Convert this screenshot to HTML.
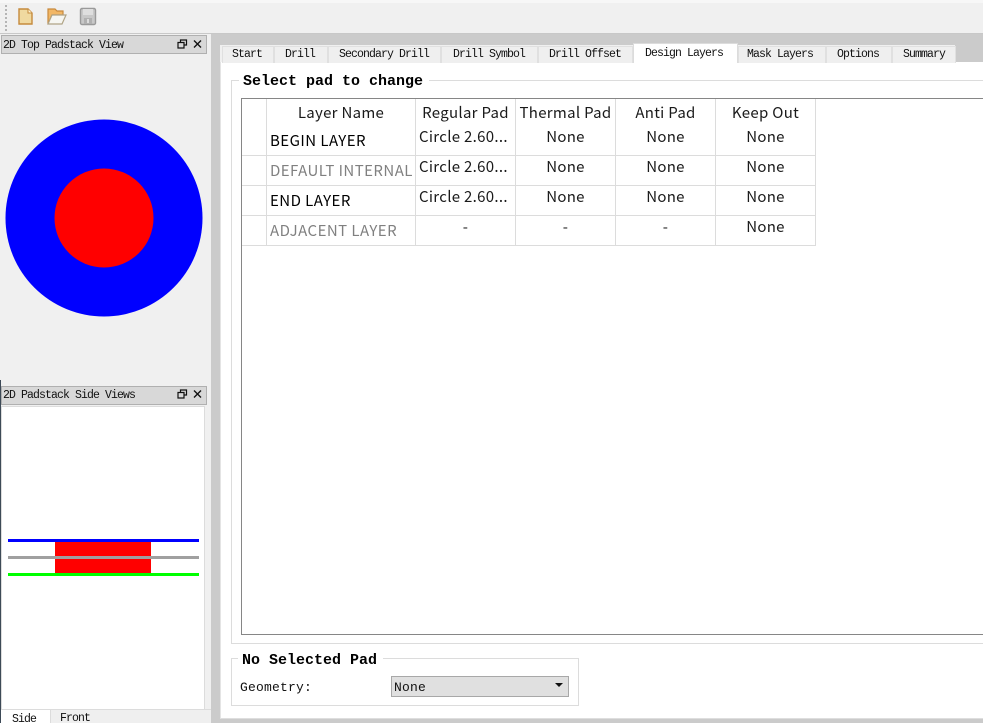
<!DOCTYPE html>
<html><head><meta charset="utf-8">
<style>
html,body{margin:0;padding:0;background:#f0f0f0}
#r{position:relative;width:983px;height:723px;overflow:hidden;background:#f0f0f0}
#r div,#r span,#r svg{position:absolute;display:block}
.m{font-family:"Liberation Mono",monospace;font-size:11.5px;letter-spacing:-.9px;color:#111;white-space:pre;line-height:14px}
.b{font-family:"Liberation Mono",monospace;font-weight:bold;font-size:15px;color:#000;white-space:pre;line-height:16px;background:#fff;padding:0 6px 0 4px}
.t{font-family:"Noto Sans CJK SC","Liberation Sans",sans-serif;font-size:15px;line-height:20px;color:#1a1a1a;white-space:pre;text-align:center;letter-spacing:.3px}
.n{letter-spacing:.45px}
.tab{background:#efefef;border:1px solid #e0e0e0;border-bottom:none;box-sizing:border-box;height:17px;top:46px}
.v{background:#dcdcdc;width:1px;top:99px;height:147px}
.h{background:#dcdcdc;height:1px;left:242px;width:574px}
</style></head><body>
<div id="r">
<!-- toolbar -->
<div style="left:0;top:0;width:983px;height:3px;background:#f7f7f7"></div>
<div style="left:0;top:33px;width:983px;height:1px;background:#c8c8c8"></div>
<svg style="left:0;top:0" width="110" height="33" viewBox="0 0 110 33">
<g fill="#b5b5b5"><rect x="5" y="5" width="2" height="2"/><rect x="5" y="9" width="2" height="2"/><rect x="5" y="13" width="2" height="2"/><rect x="5" y="17" width="2" height="2"/><rect x="5" y="21" width="2" height="2"/><rect x="5" y="25" width="2" height="2"/><rect x="5" y="29" width="2" height="2"/></g>
<path d="M19 9H28L32 13V24H19Z" fill="#f0d9a0" stroke="#c58a3c" stroke-width="1.4"/>
<path d="M28 9V13H32" fill="#fff3d0" stroke="#c58a3c"/>
<path d="M48 24V9H55L57 11H63V15H52L48 24Z" fill="#f2b765" stroke="#c8893c" stroke-width="1.2"/>
<path d="M48 24L52 15H66L62 24Z" fill="#f6f6f2" stroke="#b0a486" stroke-width="1.2"/>
<rect x="80.500" y="8.500" width="15" height="16" rx="1.500" fill="#c8c8c8" stroke="#9a9a9a" stroke-width="1.400"/>
<rect x="83" y="9" width="10" height="6" fill="#dedede"/>
<rect x="84" y="18" width="8" height="6" fill="#b0b0b0"/>
<rect x="87" y="19" width="2" height="4" fill="#dcdcdc"/>
</svg>
<!-- gutters -->
<div style="left:211px;top:34px;width:772px;height:11px;background:#cbcbcb"></div>
<div style="left:211px;top:34px;width:9px;height:689px;background:#cbcbcb"></div>
<div style="left:955px;top:45px;width:28px;height:17px;background:#cbcbcb"></div>
<div style="left:220px;top:719px;width:763px;height:4px;background:#cbcbcb"></div>
<!-- page -->
<div style="left:220px;top:62px;width:763px;height:657px;background:#fff;border-bottom:1px solid #dedede;border-left:1px solid #e4e4e4;box-sizing:border-box"></div>
<!-- tabs -->
<div class="tab" style="left:222px;width:52px"></div><span class="m" style="left:232px;top:48px">Start</span>
<div class="tab" style="left:274px;width:54px"></div><span class="m" style="left:285px;top:48px">Drill</span>
<div class="tab" style="left:328px;width:113px"></div><span class="m" style="left:339px;top:48px">Secondary Drill</span>
<div class="tab" style="left:441px;width:97px"></div><span class="m" style="left:453px;top:48px">Drill Symbol</span>
<div class="tab" style="left:538px;width:95px"></div><span class="m" style="left:549px;top:48px">Drill Offset</span>
<div style="left:633px;top:43px;width:105px;height:20px;background:#fff;border:1px solid #dcdcdc;border-bottom:none;box-sizing:border-box"></div><span class="m" style="left:645px;top:47px">Design Layers</span>
<div class="tab" style="left:738px;width:88px"></div><span class="m" style="left:747px;top:48px">Mask Layers</span>
<div class="tab" style="left:826px;width:66px"></div><span class="m" style="left:837px;top:48px">Options</span>
<div class="tab" style="left:892px;width:64px"></div><span class="m" style="left:903px;top:48px">Summary</span>
<!-- group 1 -->
<div style="left:231px;top:80px;width:760px;height:564px;border:1px solid #dcdcdc;box-sizing:border-box"></div>
<span class="b" style="left:239px;top:74px">Select pad to change</span>
<!-- table -->
<div style="left:241px;top:98px;width:750px;height:537px;border:1px solid #868686;box-sizing:border-box;background:#fff"></div>
<div class="v" style="left:266px"></div>
<div class="v" style="left:415px"></div>
<div class="v" style="left:515px"></div>
<div class="v" style="left:615px"></div>
<div class="v" style="left:715px"></div>
<div class="v" style="left:815px"></div>
<div class="h" style="top:155px"></div>
<div class="h" style="top:185px"></div>
<div class="h" style="top:215px"></div>
<div class="h" style="top:245px"></div>
<span class="t" style="left:267px;width:148px;top:103px">Layer Name</span>
<span class="t" style="left:416px;width:99px;top:103px">Regular Pad</span>
<span class="t" style="left:516px;width:99px;top:103px">Thermal Pad</span>
<span class="t" style="left:616px;width:99px;top:103px">Anti Pad</span>
<span class="t" style="left:716px;width:99px;top:103px">Keep Out</span>

<span class="t n" style="left:270px;top:131px;color:#000">BEGIN LAYER</span>
<span class="t n" style="left:270px;top:161px;color:#808080">DEFAULT INTERNAL</span>
<span class="t n" style="left:270px;top:191px;color:#000">END LAYER</span>
<span class="t n" style="left:270px;top:221px;color:#808080">ADJACENT LAYER</span>

<span class="t" style="left:419px;top:127px">Circle 2.60...</span>
<span class="t" style="left:419px;top:157px">Circle 2.60...</span>
<span class="t" style="left:419px;top:187px">Circle 2.60...</span>
<span class="t" style="left:416px;width:99px;top:217px">-</span>

<span class="t" style="left:516px;width:99px;top:127px">None</span>
<span class="t" style="left:516px;width:99px;top:157px">None</span>
<span class="t" style="left:516px;width:99px;top:187px">None</span>
<span class="t" style="left:516px;width:99px;top:217px">-</span>

<span class="t" style="left:616px;width:99px;top:127px">None</span>
<span class="t" style="left:616px;width:99px;top:157px">None</span>
<span class="t" style="left:616px;width:99px;top:187px">None</span>
<span class="t" style="left:616px;width:99px;top:217px">-</span>

<span class="t" style="left:716px;width:99px;top:127px">None</span>
<span class="t" style="left:716px;width:99px;top:157px">None</span>
<span class="t" style="left:716px;width:99px;top:187px">None</span>
<span class="t" style="left:716px;width:99px;top:217px">None</span>
<!-- group 2 -->
<div style="left:231px;top:658px;width:348px;height:48px;border:1px solid #dcdcdc;box-sizing:border-box"></div>
<span class="b" style="left:238px;top:653px">No Selected Pad</span>
<span class="m" style="left:240px;top:681px;font-size:13px;letter-spacing:.2px">Geometry:</span>
<div style="left:391px;top:676px;width:178px;height:21px;background:#e0e0e0;border:1px solid #a8a8a8;box-sizing:border-box"></div>
<span class="m" style="left:394px;top:681px;font-size:13px;letter-spacing:.2px">None</span>
<svg style="left:555px;top:683px" width="9" height="5"><path d="M0 0H8L4 4Z" fill="#111"/></svg>
<!-- left dock -->
<div style="left:1px;top:35px;width:206px;height:19px;background:#d8d8d8;border:1px solid #b0b0b0;box-sizing:border-box"></div>
<span class="m" style="left:3px;top:39px">2D Top Padstack View</span>
<svg style="left:177px;top:39px" width="26" height="11"><path d="M3.500 3.500V1H9.500V6H7M1 3.500H7V9H1Z" fill="none" stroke="#111" stroke-width="1.200"/><path d="M17 1.500L24 8.500M24 1.500L17 8.500" stroke="#111" stroke-width="1.400"/></svg>
<svg style="left:0;top:110px" width="208" height="216"><circle cx="104" cy="108" r="98.500" fill="#0000ff"/><circle cx="104" cy="108" r="49.500" fill="#ff0000"/></svg>
<div style="left:1px;top:386px;width:206px;height:19px;background:#d8d8d8;border:1px solid #b0b0b0;box-sizing:border-box"></div>
<span class="m" style="left:3px;top:389px">2D Padstack Side Views</span>
<svg style="left:177px;top:389px" width="26" height="11"><path d="M3.500 3.500V1H9.500V6H7M1 3.500H7V9H1Z" fill="none" stroke="#111" stroke-width="1.200"/><path d="M17 1.500L24 8.500M24 1.500L17 8.500" stroke="#111" stroke-width="1.400"/></svg>
<div style="left:1px;top:406px;width:204px;height:304px;background:#fff;border:1px solid #dcdcdc;box-sizing:border-box"></div>
<div style="left:55px;top:539px;width:96px;height:35px;background:#ff0000"></div>
<div style="left:8px;top:538.500px;width:191px;height:3.500px;background:#0000ff"></div>
<div style="left:8px;top:555.500px;width:191px;height:3.500px;background:#a0a0a0"></div>
<div style="left:8px;top:573px;width:191px;height:3px;background:#00ff00"></div>
<div style="left:1px;top:710px;width:49px;height:13px;background:#fff"></div>
<div style="left:50px;top:709px;width:161px;height:14px;background:#efefef;border-top:1px solid #dcdcdc;border-left:1px solid #dcdcdc;box-sizing:border-box"></div>
<span class="m" style="left:12px;top:713px">Side</span>
<span class="m" style="left:60px;top:712px">Front</span>
<div style="left:0;top:380px;width:1px;height:343px;background:#3d4a57"></div>
</div>
</body></html>
